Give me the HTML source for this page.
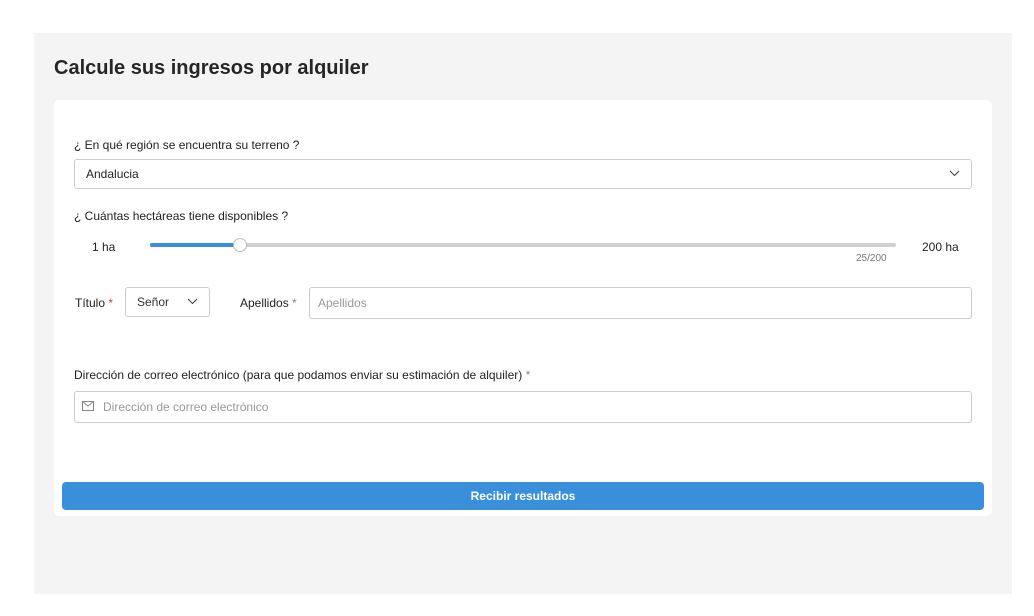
<!DOCTYPE html>
<html><head><meta charset="utf-8"><style>
*{box-sizing:border-box;margin:0;padding:0}
body{width:1034px;height:616px;background:#fff;font-family:"Liberation Sans",Arial,sans-serif;color:#222;position:relative;overflow:hidden}
.a{position:absolute}
.bg{left:34px;top:33px;width:978px;height:561px;background:#f4f4f4}
h1{position:absolute;left:54px;top:57px;font-size:20px;font-weight:bold;color:#262626}
.card{left:54px;top:100px;width:938px;height:416px;background:#fff;border-radius:5px}
.lbl{font-size:12px;color:#222}
.box{border:1px solid #ccc;border-radius:3px;background:#fff}
.ph{color:#999;font-size:12px}
</style></head><body>
<div class="a bg"></div>
<h1>Calcule sus ingresos por alquiler</h1>
<div class="a card"></div>
<div class="a lbl" style="left:74px;top:138px">¿ En qué región se encuentra su terreno ?</div>
<div class="a box" style="left:74px;top:159px;width:898px;height:30px"></div>
<div class="a" style="left:86px;top:167px;font-size:12px">Andalucia</div>
<svg class="a" style="left:949px;top:169px" width="11" height="9"><path d="M1 2l4.5 4.5 4.5-4.5" fill="none" stroke="#444" stroke-width="1.1"/></svg>
<div class="a lbl" style="left:74px;top:209px">¿ Cuántas hectáreas tiene disponibles ?</div>
<div class="a" style="left:92px;top:240px;font-size:12px">1 ha</div>
<div class="a" style="left:150px;top:243px;width:746px;height:4px;background:#d0d0d0;border-radius:2px"></div>
<div class="a" style="left:150px;top:243px;width:90px;height:4px;background:#3a8fdb;border-radius:2px"></div>
<div class="a" style="left:233px;top:238px;width:14px;height:14px;border-radius:50%;background:#fff;border:1px solid #bbb"></div>
<div class="a" style="left:856px;top:253px;font-size:10px;color:#777">25/200</div>
<div class="a" style="left:922px;top:240px;font-size:12px">200 ha</div>
<div class="a lbl" style="left:75px;top:296px">Título <span style="color:#d33">*</span></div>
<div class="a box" style="left:125px;top:287px;width:85px;height:30px"></div>
<div class="a" style="left:137px;top:295px;font-size:12px;color:#333">Señor</div>
<svg class="a" style="left:187px;top:297px" width="11" height="9"><path d="M1 2l4.5 4.5 4.5-4.5" fill="none" stroke="#444" stroke-width="1.1"/></svg>
<div class="a lbl" style="left:240px;top:296px">Apellidos <span style="color:#888">*</span></div>
<div class="a box" style="left:309px;top:287px;width:663px;height:32px"></div>
<div class="a ph" style="left:318px;top:296px">Apellidos</div>
<div class="a lbl" style="left:74px;top:368px">Dirección de correo electrónico (para que podamos enviar su estimación de alquiler) <span style="color:#888">*</span></div>
<div class="a box" style="left:74px;top:391px;width:898px;height:32px"></div>
<svg class="a" style="left:82px;top:401px" width="13" height="11"><rect x="0.5" y="0.5" width="11" height="9" fill="none" stroke="#888"/><path d="M1 1l5 4 5-4" fill="none" stroke="#888"/></svg>
<div class="a ph" style="left:103px;top:400px">Dirección de correo electrónico</div>
<div class="a" style="left:62px;top:482px;width:922px;height:28px;background:#3a8fdb;border-radius:4px;color:#fff;font-size:12px;font-weight:bold;text-align:center;line-height:29px">Recibir resultados</div>
</body></html>
